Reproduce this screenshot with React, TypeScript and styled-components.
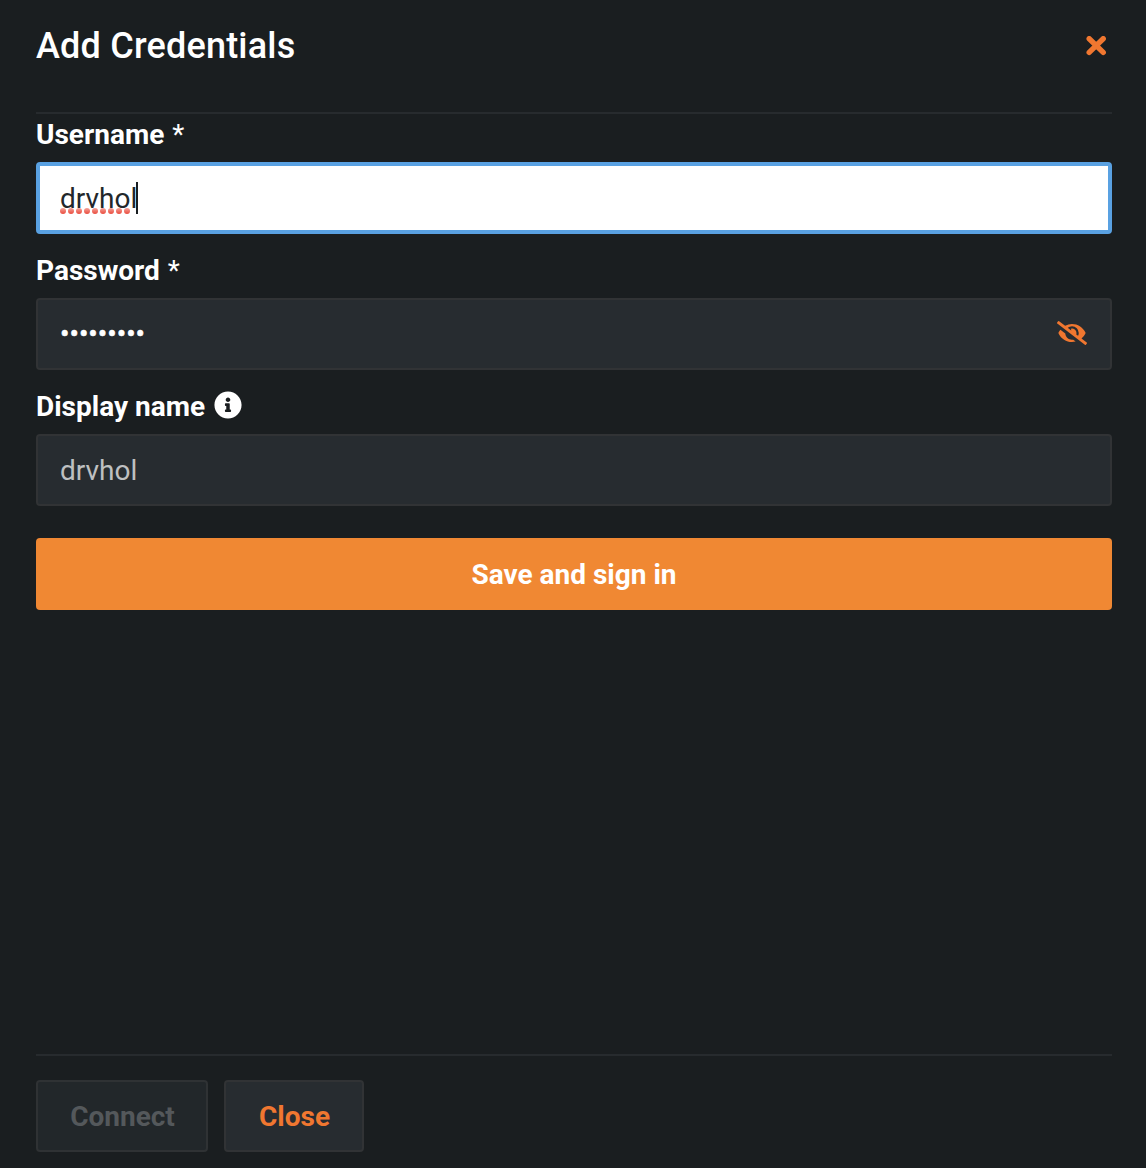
import React from 'react';
import styled, { createGlobalStyle } from 'styled-components';
import { FaEyeSlash, FaInfoCircle } from 'react-icons/fa';

const GlobalStyle = createGlobalStyle`
  * { box-sizing: border-box; }
  body {
    margin: 0;
    background: #1a1e20;
    color: #fff;
    font-family: Roboto, sans-serif;
    font-size: 28px;
  }
`;

const Dialog = styled.main`
  display: flex;
  flex-direction: column;
  height: 100vh;
  padding: 0 34px 16px 36px;
`;

const Header = styled.header`
  display: flex;
  align-items: center;
  justify-content: space-between;
  height: 114px;
  padding: 0 6px 20px 0;
  border-bottom: 2px solid #272b2e;
`;

const Title = styled.h1`
  margin: 0;
  font-size: 36px;
  font-weight: 500;
  line-height: 44px;
  letter-spacing: 0.2px;
`;

const IconButton = styled.button`
  display: flex;
  padding: 0;
  border: 0;
  background: none;
  color: #f07730;
`;

const RevealButton = styled(IconButton)`
  margin: 0 1px 4px 0;
`;

const Form = styled.form`
  display: flex;
  flex-direction: column;
`;

const Label = styled.label`
  display: flex;
  align-items: center;
  gap: 8px;
  height: 48px;
  padding-bottom: 6px;
  font-weight: 700;
  line-height: 42px;
`;

const Required = styled.span`
  font-weight: 400;
`;

const InfoIcon = styled(FaInfoCircle)`
  margin: 0 0 4px 0.5px;
`;

const Field = styled.div<{ $focused?: boolean }>`
  display: flex;
  align-items: center;
  justify-content: space-between;
  height: 72px;
  margin-bottom: 16px;
  padding: 2px ${p => (p.$focused ? 20 : 22)}px 0;
  border: ${p => (p.$focused ? '4px solid #59a1e2' : '2px solid #313335')};
  border-radius: 4px;
  background: ${p => (p.$focused ? '#fff' : '#272c30')};
`;

const Value = styled.span<{ $color: string }>`
  position: relative;
  color: ${p => p.$color};
  line-height: 36px;
`;

const SpellingMark = styled.svg`
  position: absolute;
  left: 0;
  top: 27px;
`;

const Caret = styled.i`
  position: absolute;
  left: 76px;
  top: 1px;
  width: 2px;
  height: 32px;
  background: #1a1e21;
`;

const Mask = styled.span`
  margin-bottom: 2px;
  line-height: 36px;
  -webkit-text-stroke: 0.5px currentColor;
`;

const Submit = styled.button`
  height: 72px;
  margin-top: 16px;
  padding: 2px 0 0;
  border: 0;
  border-radius: 4px;
  background: #f08833;
  color: #fff;
  font: 700 28px/36px Roboto, sans-serif;
`;

const Footer = styled.footer`
  display: flex;
  gap: 16px;
  margin-top: auto;
  padding-top: 24px;
  border-top: 2px solid #272b2e;
`;

const Action = styled.button<{ $width: number }>`
  width: ${p => p.$width}px;
  height: 72px;
  padding: 2px 0 0 1px;
  border: 2px solid #313335;
  border-radius: 4px;
  background: #272c30;
  color: #f07730;
  font: 700 28px/36px Roboto, sans-serif;

  &:disabled {
    background: #22272a;
    border-color: #2f3234;
    color: #54585b;
  }
`;

export default function App() {
  return (
    <>
      <GlobalStyle />
      <Dialog>
        <Header>
          <Title>Add Credentials</Title>
          <IconButton aria-label="Dismiss">
            <svg width="20" height="20" viewBox="0 0 20 20" fill="none" stroke="currentColor" strokeWidth="5.4" strokeLinecap="round">
              <path d="M3.2 2.7 17.2 16.4M17.2 2.7 3.2 16.4" />
            </svg>
          </IconButton>
        </Header>
        <Form>
          <Label>Username <Required>*</Required></Label>
          <Field $focused>
            <Value $color="#22272b">
              drvhol
              <SpellingMark width="72" height="6" viewBox="0 0 72 6">
                <defs>
                  <linearGradient id="mark" x1="0" y1="0" x2="0" y2="1">
                    <stop offset="0" stopColor="#f3a39a" />
                    <stop offset="1" stopColor="#ea4a3c" />
                  </linearGradient>
                </defs>
                {Array.from({ length: 9 }, (_, i) => (
                  <circle key={i} cx={3 + i * 8} cy="3" r="3" fill="url(#mark)" />
                ))}
              </SpellingMark>
              <Caret />
            </Value>
          </Field>
          <Label>Password <Required>*</Required></Label>
          <Field>
            <Mask>•••••••••</Mask>
            <RevealButton type="button" aria-label="Show password"><FaEyeSlash size={30} /></RevealButton>
          </Field>
          <Label>Display name <InfoIcon size={28} /></Label>
          <Field>
            <Value $color="#bec0c1">drvhol</Value>
          </Field>
          <Submit type="button">Save and sign in</Submit>
        </Form>
        <Footer>
          <Action $width={172} disabled>Connect</Action>
          <Action $width={140}>Close</Action>
        </Footer>
      </Dialog>
    </>
  );
}
